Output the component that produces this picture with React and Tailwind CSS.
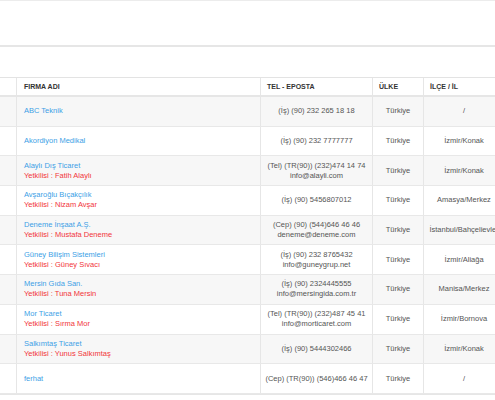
import React from "react";

const rows = [
  { name: "ABC Teknik", tel: ["(İş) (90) 232 265 18 18"], ulke: "Türkiye", il: "/" },
  { name: "Akordiyon Medikal", tel: ["(İş) (90) 232 7777777"], ulke: "Türkiye", il: "İzmir/Konak" },
  { name: "Alaylı Dış Ticaret", yet: "Fatih Alaylı", tel: ["(Tel) (TR(90)) (232)474 14 74", "info@alayli.com"], ulke: "Türkiye", il: "İzmir/Konak" },
  { name: "Avşaroğlu Bıçakçılık", yet: "Nizam Avşar", tel: ["(İş) (90) 5456807012"], ulke: "Türkiye", il: "Amasya/Merkez" },
  { name: "Deneme İnşaat A.Ş.", yet: "Mustafa Deneme", tel: ["(Cep) (90) (544)646 46 46", "deneme@deneme.com"], ulke: "Türkiye", il: "İstanbul/Bahçelievler" },
  { name: "Güney Bilişim Sistemleri", yet: "Güney Sıvacı", tel: ["(İş) (90) 232 8765432", "info@guneygrup.net"], ulke: "Türkiye", il: "İzmir/Aliağa" },
  { name: "Mersin Gıda San.", yet: "Tuna Mersin", tel: ["(İş) (90) 2324445555", "info@mersingida.com.tr"], ulke: "Türkiye", il: "Manisa/Merkez" },
  { name: "Mor Ticaret", yet: "Sırma Mor", tel: ["(Tel) (TR(90)) (232)487 45 41", "info@morticaret.com"], ulke: "Türkiye", il: "İzmir/Bornova" },
  { name: "Salkımtaş Ticaret", yet: "Yunus Salkımtaş", tel: ["(İş) (90) 5444302466"], ulke: "Türkiye", il: "İzmir/Konak" },
  { name: "ferhat", tel: ["(Cep) (TR(90)) (546)466 46 47"], ulke: "Türkiye", il: "/" },
];

const grid = "grid grid-cols-[17px_244px_112px_51px_80px] w-[504px]";

export default function App() {
  return (
    <div
      className="w-[495px] h-[400px] overflow-hidden bg-white text-[#555]"
      style={{ fontFamily: '"Liberation Sans", Arial, sans-serif' }}
    >
      <div className="h-[47px] border-t border-[#ececec] border-b-2 border-b-[#e6e6e6]"></div>
      <div className="h-[30px]"></div>
      <div className={`${grid} border-t border-[#e3e3e3] border-b-2 border-b-[#e6e6e6] h-[20px] text-[7px] font-bold text-[#333] leading-[10px]`}>
        <div className="border-r border-[#e6e6e6]"></div>
        <div className="border-r border-[#e6e6e6] flex items-center pl-[7px]">FIRMA ADI</div>
        <div className="border-r border-[#e6e6e6] flex items-center pl-[6px]">TEL - EPOSTA</div>
        <div className="border-r border-[#e6e6e6] flex items-center pl-[6px]">ÜLKE</div>
        <div className="flex items-center pl-[6px]">İLÇE / İL</div>
      </div>
      {rows.map((r, i) => (
        <div
          key={i}
          className={`${grid} h-[29.7px] border-b border-[#e8e8e8] text-[7.5px] leading-[10px] ${i % 2 === 0 ? "bg-[#f7f7f7]" : "bg-white"}`}
        >
          <div className="border-r border-[#e6e6e6]"></div>
          <div className="border-r border-[#e6e6e6] flex flex-col justify-center pl-[7px] whitespace-nowrap">
            <span className="text-[#3d9fe6]">{r.name}</span>
            {r.yet && <span className="text-[#f2353b]">Yetkilisi : {r.yet}</span>}
          </div>
          <div className="border-r border-[#e6e6e6] flex flex-col justify-center items-center whitespace-nowrap">
            {r.tel.map((t, j) => (
              <span key={j}>{t}</span>
            ))}
          </div>
          <div className="border-r border-[#e6e6e6] flex items-center justify-center">{r.ulke}</div>
          <div className="flex items-center justify-center whitespace-nowrap">{r.il}</div>
        </div>
      ))}
      <div className="w-[495px] border-t border-[#e6e6e6]"></div>
    </div>
  );
}
